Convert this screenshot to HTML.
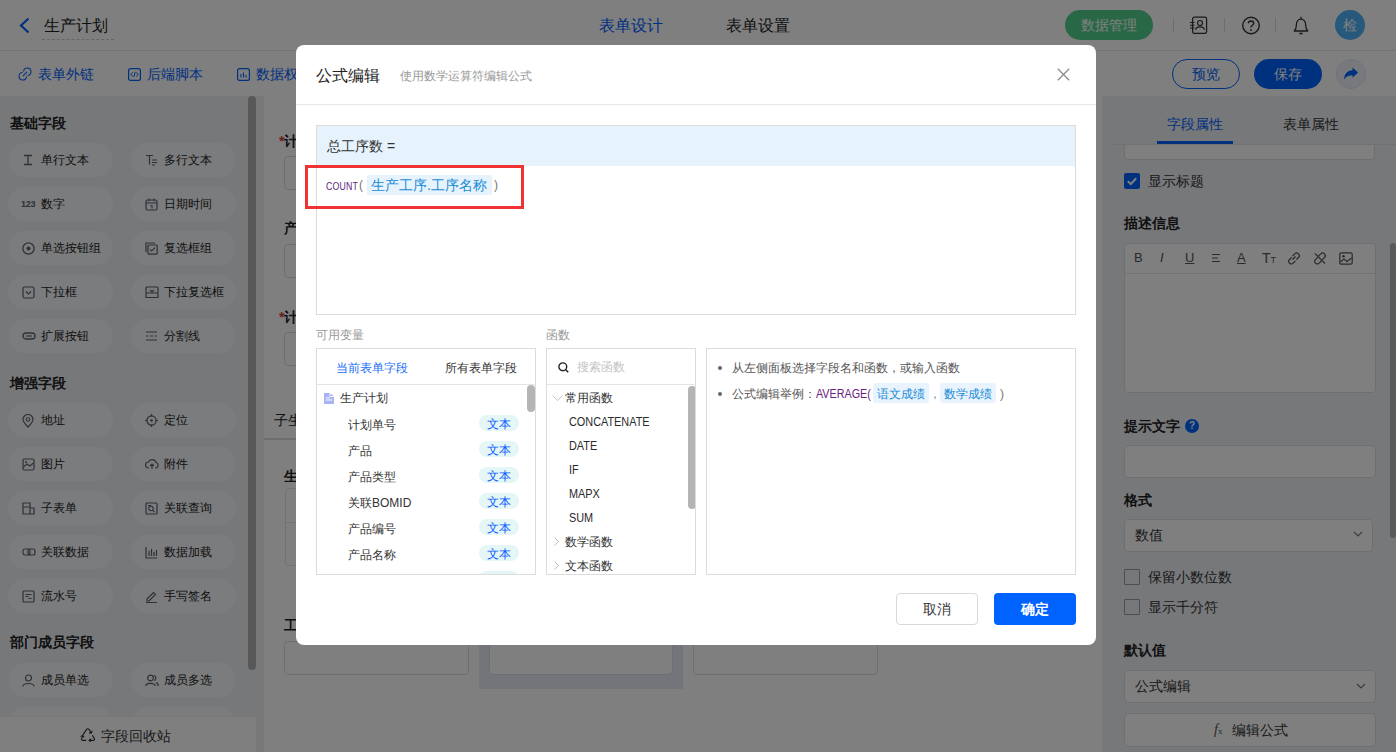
<!DOCTYPE html>
<html><head><meta charset="utf-8">
<style>
*{box-sizing:border-box;margin:0;padding:0}
html,body{width:1396px;height:752px;overflow:hidden;background:#fff;font-family:"Liberation Sans",sans-serif;color:#333}
.abs{position:absolute;white-space:nowrap}
#hdr{position:absolute;left:0;top:0;width:1396px;height:51px;background:#fff;border-bottom:1px solid #e8e8e8}
#tb{position:absolute;left:0;top:51px;width:1396px;height:45px;background:#fff}
#lp{position:absolute;left:0;top:96px;width:263px;height:656px;background:#eef0f4;overflow:hidden}
#cv{position:absolute;left:263px;top:96px;width:839px;height:656px;background:#fff;overflow:hidden}
#rp{position:absolute;left:1102px;top:96px;width:294px;height:656px;background:#eef0f4;overflow:hidden}
.pill{position:absolute;width:105px;height:34px;border-radius:17px;background:#f7f8fb;font-size:12px;color:#222;line-height:34px}
.pill .t{position:absolute;left:33px;top:0;white-space:nowrap}
.pill svg{position:absolute;left:14px;top:11px}
.sec{position:absolute;left:10px;font-size:14px;font-weight:bold;color:#222;line-height:20px;white-space:nowrap}
#ov{position:absolute;left:0;top:0;width:1396px;height:752px;background:rgba(0,0,0,.5)}
#md{position:absolute;left:296px;top:45px;width:800px;height:600px;background:#fff;border-radius:8px}
.row{position:absolute;left:0;width:210px;height:18px}
.row span{position:absolute;left:31px;top:1px;font-size:12px;color:#333;line-height:16px;white-space:nowrap}
.row::after{content:"文本";position:absolute;left:162px;top:-1px;width:40px;height:16px;border-radius:8px;background:#e5f6f6;color:#0a5cff;font-size:12px;line-height:18px;text-align:center}
.fn{position:absolute;left:22px;font-size:12px;color:#333;line-height:16px;white-space:nowrap;font-size:12.5px;transform:scaleX(0.87);transform-origin:0 0;color:#2a2a2a}
</style></head><body>
<div id="hdr">
  <svg class="abs" style="left:18px;top:17px" width="13" height="17" viewBox="0 0 13 17"><path d="M10.5 1.5 L3 8.5 L10.5 15.5" fill="none" stroke="#0062ff" stroke-width="2.2"/></svg>
  <div class="abs" style="left:44px;top:15px;font-size:16px;color:#222;line-height:22px">生产计划</div>
  <div class="abs" style="left:42px;top:39px;width:72px;border-top:1px dashed #ccc"></div>
  <div class="abs" style="left:599px;top:15px;font-size:16px;color:#0062ff;line-height:22px">表单设计</div>
  <div class="abs" style="left:726px;top:15px;font-size:16px;color:#222;line-height:22px">表单设置</div>
  <div class="abs" style="left:1065px;top:10px;width:88px;height:30px;border-radius:15px;background:#50d08c;color:#fff;font-size:14px;line-height:30px;text-align:center">数据管理</div>
  <div class="abs" style="left:1173px;top:18px;width:1px;height:14px;background:#ddd"></div>
  <div class="abs" style="left:1224px;top:18px;width:1px;height:14px;background:#ddd"></div>
  <div class="abs" style="left:1275px;top:18px;width:1px;height:14px;background:#ddd"></div>
  <svg class="abs" style="left:1189px;top:16px" width="20" height="18" viewBox="0 0 20 18"><rect x="3.6" y="1.2" width="14" height="16.2" rx="1.8" fill="none" stroke="#333" stroke-width="1.25"/><circle cx="11" cy="7" r="2.5" fill="none" stroke="#333" stroke-width="1.2"/><path d="M6.6 13.8 C7.2 10 14.8 10 15.4 13.8" fill="none" stroke="#333" stroke-width="1.2"/><path d="M1 6.5h4.5M1 9.3h4.5M1 12h4.5" stroke="#333" stroke-width="1.1"/></svg>
  <svg class="abs" style="left:1241px;top:16px" width="20" height="20" viewBox="0 0 20 20"><circle cx="10" cy="9.5" r="8.3" fill="none" stroke="#333" stroke-width="1.4"/><path d="M7.3 7.3 C7.3 4.3 12.7 4.3 12.7 7.3 C12.7 9.3 10 9.3 10 11.5" fill="none" stroke="#333" stroke-width="1.4"/><circle cx="10" cy="14" r="0.9" fill="#333"/></svg>
  <svg class="abs" style="left:1292px;top:15px" width="18" height="20" viewBox="0 0 18 20"><path d="M2.3 16 H15.7 C14.2 14.5 13.6 13 13.6 9.5 C13.6 6.3 11.6 4.2 9 4.2 C6.4 4.2 4.4 6.3 4.4 9.5 C4.4 13 3.8 14.5 2.3 16 Z" fill="none" stroke="#333" stroke-width="1.3" stroke-linejoin="round"/><path d="M9 1.8v2.2M7.3 18.5h3.4" stroke="#333" stroke-width="1.3"/></svg>
  <div class="abs" style="left:1335px;top:10px;width:30px;height:30px;border-radius:50%;background:#4cb2f6;color:#fff;font-size:14px;line-height:30px;text-align:center">检</div>
</div>
<div id="tb">
  <svg class="abs" style="left:18px;top:16px" width="14" height="14" viewBox="0 0 14 14"><path d="M5.6 4.2 A3.7 3.7 0 1 1 9.8 8.4 M8.4 9.8 A3.7 3.7 0 1 1 4.2 5.6 M5.2 8.8 L8.8 5.2" fill="none" stroke="#0062ff" stroke-width="1.05" stroke-linecap="round"/></svg>
  <div class="abs" style="left:38px;top:13px;font-size:14px;color:#0062ff;line-height:20px">表单外链</div>
  <svg class="abs" style="left:128px;top:17px" width="13" height="13" viewBox="0 0 13 13"><rect x="0.6" y="0.6" width="11.8" height="11.8" rx="2" fill="none" stroke="#0062ff" stroke-width="1.2"/><path d="M4.5 4.5 L3 6.5 L4.5 8.5 M8.5 4.5 L10 6.5 L8.5 8.5 M7.2 3.8 L5.8 9.2" fill="none" stroke="#0062ff" stroke-width="1"/></svg>
  <div class="abs" style="left:147px;top:13px;font-size:14px;color:#0062ff;line-height:20px">后端脚本</div>
  <svg class="abs" style="left:237px;top:17px" width="13" height="13" viewBox="0 0 13 13"><rect x="0.6" y="0.6" width="11.8" height="11.8" rx="2" fill="none" stroke="#0062ff" stroke-width="1.2"/><path d="M4 6v3.5M6.5 4.5v5M9 7v2.5" stroke="#0062ff" stroke-width="1.1"/></svg>
  <div class="abs" style="left:256px;top:13px;font-size:14px;color:#0062ff;line-height:20px">数据权限</div>
  <div class="abs" style="left:1172px;top:8px;width:68px;height:30px;border-radius:15px;border:1px solid #0062ff;color:#0062ff;font-size:14px;line-height:28px;text-align:center">预览</div>
  <div class="abs" style="left:1254px;top:8px;width:68px;height:30px;border-radius:15px;background:#0062ff;color:#fff;font-size:14px;line-height:30px;text-align:center">保存</div>
  <div class="abs" style="left:1336px;top:8px;width:30px;height:30px;border-radius:50%;border:1px solid #dfe6f5;background:#f0f3fa"></div>
  <svg class="abs" style="left:1343px;top:15px" width="16" height="16" viewBox="0 0 16 16"><path d="M15 6.5 L9.5 1.5 V4.2 C4.5 4.5 1.5 7.5 1 13.5 C3 10.5 5.5 9.2 9.5 9.2 V11.8 Z" fill="#0062ff"/></svg>
</div>
<div id="lp">
  <div class="sec" style="top:17px">基础字段</div>
  <div class="pill" style="left:8px;top:47px"><svg width="12" height="12" viewBox="0 0 12 12"><path d="M2 1.5h8M2 10.5h8M6 1.5v9" stroke="#5c6270" stroke-width="1.3" fill="none"/></svg><span class="t">单行文本</span></div>
  <div class="pill" style="left:131px;top:47px"><svg width="13" height="12" viewBox="0 0 13 12"><path d="M1 1.5h7M4.5 1.5v9M7 6h5M7 8.5h5M7 11h3" stroke="#5c6270" stroke-width="1.2" fill="none"/></svg><span class="t">多行文本</span></div>
  <div class="pill" style="left:8px;top:91px"><span class="abs" style="left:13px;top:0;font-size:9px;font-weight:bold;color:#5c6270;letter-spacing:-0.3px">123</span><span class="t">数字</span></div>
  <div class="pill" style="left:131px;top:91px"><svg width="13" height="13" viewBox="0 0 13 13"><rect x="1" y="2" width="11" height="10" rx="1.5" stroke="#5c6270" stroke-width="1.2" fill="none"/><path d="M1 5h11M4 0.5v3M9 0.5v3M5.5 7.5h1.5v3" stroke="#5c6270" stroke-width="1.1" fill="none"/></svg><span class="t">日期时间</span></div>
  <div class="pill" style="left:8px;top:135px"><svg width="13" height="13" viewBox="0 0 13 13"><circle cx="6.5" cy="6.5" r="5.6" stroke="#5c6270" stroke-width="1.3" fill="none"/><circle cx="6.5" cy="6.5" r="2" fill="#5c6270"/></svg><span class="t">单选按钮组</span></div>
  <div class="pill" style="left:131px;top:135px"><svg width="13" height="13" viewBox="0 0 13 13"><path d="M1 10V1h9" stroke="#5c6270" stroke-width="1.2" fill="none"/><rect x="3" y="3" width="9.2" height="9.2" rx="1" stroke="#5c6270" stroke-width="1.2" fill="none"/><path d="M5 7.3l1.7 1.7 3.3-3.3" stroke="#5c6270" stroke-width="1.2" fill="none"/></svg><span class="t">复选框组</span></div>
  <div class="pill" style="left:8px;top:179px"><svg width="13" height="13" viewBox="0 0 13 13"><rect x="1" y="1" width="11" height="11" rx="1.5" stroke="#5c6270" stroke-width="1.2" fill="none"/><path d="M4 5.5l2.5 2.5 2.5-2.5" stroke="#5c6270" stroke-width="1.2" fill="none"/></svg><span class="t">下拉框</span></div>
  <div class="pill" style="left:131px;top:179px"><svg width="14" height="13" viewBox="0 0 14 13"><rect x="1" y="1" width="12" height="6" rx="1" stroke="#5c6270" stroke-width="1.2" fill="none"/><path d="M1 7v4.5h12V7M5 4l2 2 2-2" stroke="#5c6270" stroke-width="1.2" fill="none"/></svg><span class="t">下拉复选框</span></div>
  <div class="pill" style="left:8px;top:223px"><svg width="14" height="12" viewBox="0 0 14 12"><rect x="1" y="3" width="12" height="6" rx="3" stroke="#5c6270" stroke-width="1.3" fill="none"/><path d="M4 6h6" stroke="#5c6270" stroke-width="1.2"/></svg><span class="t">扩展按钮</span></div>
  <div class="pill" style="left:131px;top:223px"><svg width="13" height="12" viewBox="0 0 13 12"><path d="M1 2h11M1 10h11M1 6h2.5M5 6h3M9.5 6h2.5" stroke="#5c6270" stroke-width="1.2" fill="none"/></svg><span class="t">分割线</span></div>

  <div class="sec" style="top:277px">增强字段</div>
  <div class="pill" style="left:8px;top:307px"><svg width="12" height="14" viewBox="0 0 12 14"><path d="M6 13 C2 9 1 7 1 5.5 a5 5 0 0 1 10 0 C11 7 10 9 6 13Z" stroke="#5c6270" stroke-width="1.2" fill="none"/><circle cx="6" cy="5.5" r="1.8" stroke="#5c6270" stroke-width="1.1" fill="none"/></svg><span class="t">地址</span></div>
  <div class="pill" style="left:131px;top:307px"><svg width="13" height="13" viewBox="0 0 13 13"><circle cx="6.5" cy="6.5" r="4.6" stroke="#5c6270" stroke-width="1.2" fill="none"/><circle cx="6.5" cy="6.5" r="1.3" fill="#5c6270"/><path d="M6.5 0v2.5M6.5 10.5V13M0 6.5h2.5M10.5 6.5H13" stroke="#5c6270" stroke-width="1.2"/></svg><span class="t">定位</span></div>
  <div class="pill" style="left:8px;top:351px"><svg width="13" height="13" viewBox="0 0 13 13"><rect x="1" y="1" width="11" height="11" rx="1.5" stroke="#5c6270" stroke-width="1.2" fill="none"/><path d="M1.5 9 L5 6 L8 8 L11.5 5" stroke="#5c6270" stroke-width="1.1" fill="none"/><circle cx="4" cy="4" r="1" fill="#5c6270"/></svg><span class="t">图片</span></div>
  <div class="pill" style="left:131px;top:351px"><svg width="14" height="12" viewBox="0 0 14 12"><path d="M4 10H3.5a3 3 0 0 1 0-6 a4 4 0 0 1 7.5 0.5 a2.8 2.8 0 0 1 -0.5 5.5H10M7 11V6M5 8l2-2 2 2" stroke="#5c6270" stroke-width="1.2" fill="none"/></svg><span class="t">附件</span></div>
  <div class="pill" style="left:8px;top:395px"><svg width="13" height="13" viewBox="0 0 13 13"><path d="M1 1h7v11H1ZM1 5h7M8 6h4v6H8" stroke="#5c6270" stroke-width="1.2" fill="none"/></svg><span class="t">子表单</span></div>
  <div class="pill" style="left:131px;top:395px"><svg width="13" height="13" viewBox="0 0 13 13"><rect x="1" y="1" width="11" height="11" rx="1" stroke="#5c6270" stroke-width="1.2" fill="none"/><circle cx="6" cy="6.5" r="2.2" stroke="#5c6270" stroke-width="1.1" fill="none"/><path d="M7.6 8.1l2 2M3 3.5h3" stroke="#5c6270" stroke-width="1.1"/></svg><span class="t">关联查询</span></div>
  <div class="pill" style="left:8px;top:439px"><svg width="14" height="12" viewBox="0 0 14 12"><rect x="1" y="3" width="7" height="6" rx="2" stroke="#5c6270" stroke-width="1.2" fill="none"/><rect x="6" y="3" width="7" height="6" rx="2" stroke="#5c6270" stroke-width="1.2" fill="none"/></svg><span class="t">关联数据</span></div>
  <div class="pill" style="left:131px;top:439px"><svg width="13" height="13" viewBox="0 0 13 13"><path d="M1 1v11h11M4 5v5M6.5 3v7M9 6v4M11.5 4v6" stroke="#5c6270" stroke-width="1.2" fill="none"/></svg><span class="t">数据加载</span></div>
  <div class="pill" style="left:8px;top:483px"><svg width="13" height="13" viewBox="0 0 13 13"><rect x="1" y="1" width="11" height="11" rx="1" stroke="#5c6270" stroke-width="1.2" fill="none"/><path d="M3.5 4.5h6M3.5 6.5h3M6.5 8.5h3" stroke="#5c6270" stroke-width="1.1"/></svg><span class="t">流水号</span></div>
  <div class="pill" style="left:131px;top:483px"><svg width="13" height="13" viewBox="0 0 13 13"><path d="M2 9 L8.5 2.5 L10.5 4.5 L4 11 H2Z M1 12.5h11" stroke="#5c6270" stroke-width="1.2" fill="none"/></svg><span class="t">手写签名</span></div>

  <div class="sec" style="top:536px">部门成员字段</div>
  <div class="pill" style="left:8px;top:567px"><svg width="13" height="13" viewBox="0 0 13 13"><circle cx="6.5" cy="4" r="3" stroke="#5c6270" stroke-width="1.2" fill="none"/><path d="M1 12.5 C1 8.5 12 8.5 12 12.5" stroke="#5c6270" stroke-width="1.2" fill="none"/></svg><span class="t">成员单选</span></div>
  <div class="pill" style="left:131px;top:567px"><svg width="14" height="13" viewBox="0 0 14 13"><circle cx="5.5" cy="4" r="2.8" stroke="#5c6270" stroke-width="1.2" fill="none"/><path d="M0.8 12 C0.8 8.5 10.2 8.5 10.2 12M9 1.5a2.6 2.6 0 0 1 0 5M11 8.5 C12.5 9 13.2 10.5 13.2 12" stroke="#5c6270" stroke-width="1.2" fill="none"/></svg><span class="t">成员多选</span></div>
  <div class="pill" style="left:8px;top:611px"></div>
  <div class="pill" style="left:131px;top:611px"></div>
  <div class="abs" style="left:248px;top:0;width:8px;height:574px;border-radius:4px;background:#b0b0b0"></div>
  <div class="abs" style="left:0;top:620px;width:256px;height:36px;background:#fff;border-top:1px solid #eee"></div>
  <svg class="abs" style="left:80px;top:632px" width="16" height="14" viewBox="0 0 16 14"><path d="M2.6 7.4 L6.6 1.4 Q7.8 0 9 1.4 L11.2 4.8 M9.4 4.9 L11.4 5.1 L12 3.1 M12.6 7.6 L14.4 10.6 Q15 12.4 13 12.4 H9.2 M10.6 11 L9 12.4 L10.6 13.8 M5.8 12.4 H3 Q1 12.4 1.6 10.6 L2.6 8.8 M1 8.4 L2.7 7.4 L3.8 9" fill="none" stroke="#333" stroke-width="1.1" stroke-linejoin="round" stroke-linecap="round"/></svg>
  <div class="abs" style="left:101px;top:630px;font-size:14px;color:#333;line-height:20px">字段回收站</div>
</div>
<div id="cv">
  <div class="abs" style="left:16px;top:37px;font-size:14px;font-weight:bold;color:#222;line-height:16px"><span style="color:#e4393c">*</span>计划单号</div>
  <div class="abs" style="left:21px;top:60px;width:300px;height:34px;border:1px solid #dcdfe6;border-radius:4px"></div>
  <div class="abs" style="left:21px;top:124px;font-size:14px;font-weight:bold;color:#222;line-height:16px">产品</div>
  <div class="abs" style="left:21px;top:148px;width:300px;height:34px;border:1px solid #dcdfe6;border-radius:4px"></div>
  <div class="abs" style="left:16px;top:213px;font-size:14px;font-weight:bold;color:#222;line-height:16px"><span style="color:#e4393c">*</span>计划日期</div>
  <div class="abs" style="left:21px;top:236px;width:300px;height:34px;border:1px solid #dcdfe6;border-radius:4px"></div>
  <div class="abs" style="left:11px;top:316px;font-size:14px;color:#222;line-height:16px">子生产工序</div>
  <div class="abs" style="left:1px;top:342px;width:800px;height:1.5px;background:#dcdcdc"></div>
  <div class="abs" style="left:21px;top:372px;font-size:14px;font-weight:bold;color:#222;line-height:16px">生产工序</div>
  <div class="abs" style="left:22px;top:392px;width:700px;height:78px;border:1px solid #e4e4e4;border-radius:4px"></div>
  <div class="abs" style="left:22px;top:426px;width:700px;height:1px;background:#e4e4e4"></div>
  <div class="abs" style="left:21px;top:521px;font-size:14px;font-weight:bold;color:#222;line-height:16px">工序</div>
  <div class="abs" style="left:216px;top:520px;width:204px;height:73px;background:#e6ebf5"></div>
  <div class="abs" style="left:21px;top:545px;width:185px;height:34px;border:1px solid #dcdfe6;border-radius:4px"></div>
  <div class="abs" style="left:226px;top:545px;width:184px;height:34px;border:1px solid #dcdfe6;border-radius:4px;background:#fff"></div>
  <div class="abs" style="left:430px;top:545px;width:185px;height:34px;border:1px solid #dcdfe6;border-radius:4px"></div>
  <div class="abs" style="left:0;top:0;width:1px;height:656px;background:#ececec"></div>
</div>
<div id="rp">
  <div class="abs" style="left:22px;top:30px;width:251px;height:34px;border:1px solid #dcdfe6;border-radius:4px;background:#fff"></div>
  <div class="abs" style="left:0;top:0;width:294px;height:48px;background:#eef0f4"></div>
  <div class="abs" style="left:65px;top:18px;font-size:14px;color:#0062ff;line-height:20px">字段属性</div>
  <div class="abs" style="left:181px;top:18px;font-size:14px;color:#333;line-height:20px">表单属性</div>
  <div class="abs" style="left:55px;top:45px;width:76px;height:3px;background:#0062ff"></div>
  <div class="abs" style="left:8px;top:48px;width:286px;height:1px;background:#e2e2e2"></div>
  <div class="abs" style="left:22px;top:77px;width:16px;height:16px;border-radius:2px;background:#0062ff"></div>
  <svg class="abs" style="left:22px;top:77px" width="16" height="16" viewBox="0 0 16 16"><path d="M3.8 8.2 L6.8 11 L12.2 5.2" stroke="#fff" stroke-width="2" fill="none"/></svg>
  <div class="abs" style="left:46px;top:75px;font-size:14px;color:#333;line-height:20px">显示标题</div>
  <div class="abs rb" style="left:22px;top:117px;font-size:14px;font-weight:bold;color:#222;line-height:20px">描述信息</div>
  <div class="abs" style="left:22px;top:147px;width:252px;height:150px;border:1px solid #dcdfe6;border-radius:4px;background:#fff"></div>
  <div class="abs" style="left:23px;top:177px;width:250px;height:1px;background:#e4e4e4"></div>
  <div class="abs" style="left:32px;top:152px;font-size:13px;color:#555;line-height:20px">B</div>
  <div class="abs" style="left:58px;top:152px;font-size:13px;color:#555;line-height:20px;font-style:italic">I</div>
  <div class="abs" style="left:83px;top:152px;font-size:13px;color:#555;line-height:20px;text-decoration:underline">U</div>
  <svg class="abs" style="left:109px;top:157px" width="10" height="10" viewBox="0 0 10 10"><path d="M1 1.5h8M1 5h6M1 8.5h8" stroke="#555" stroke-width="1"/></svg>
  <div class="abs" style="left:135px;top:152px;font-size:13px;color:#555;line-height:20px;text-decoration:underline">A</div>
  <div class="abs" style="left:160px;top:152px;font-size:14px;color:#555;line-height:20px">T<span style="font-size:9px">T</span></div>
  <svg class="abs" style="left:185px;top:156px" width="14" height="13" viewBox="0 0 14 13"><path d="M5.5 7.5 L8.5 4.5 M4.7 5.3 L2.5 7.5 a2.6 2.6 0 0 0 3.7 3.7 L8.4 9 M5.6 4 L7.8 1.8 a2.6 2.6 0 0 1 3.7 3.7 L9.3 7.7" fill="none" stroke="#555" stroke-width="1.2"/></svg>
  <svg class="abs" style="left:211px;top:156px" width="14" height="13" viewBox="0 0 14 13"><path d="M4.7 5.3 L2.5 7.5 a2.6 2.6 0 0 0 3.7 3.7 L8.4 9 M5.6 4 L7.8 1.8 a2.6 2.6 0 0 1 3.7 3.7 L9.3 7.7 M2 1.5 L12 11.5" fill="none" stroke="#555" stroke-width="1.2"/></svg>
  <svg class="abs" style="left:237px;top:156px" width="14" height="13" viewBox="0 0 14 13"><rect x="0.8" y="0.8" width="12.4" height="11.4" rx="1.5" stroke="#555" stroke-width="1.2" fill="none"/><path d="M1.5 10 L5 7 L8 9.5 L12.5 6" stroke="#555" stroke-width="1.1" fill="none"/><circle cx="4.5" cy="4.3" r="1.2" fill="#555"/></svg>
  <div class="abs" style="left:22px;top:320px;font-size:14px;font-weight:bold;color:#222;line-height:20px">提示文字</div>
  <div class="abs" style="left:83px;top:323px;width:14px;height:14px;border-radius:50%;background:#0062ff;color:#fff;font-size:10px;font-weight:bold;line-height:14px;text-align:center">?</div>
  <div class="abs" style="left:22px;top:349px;width:252px;height:33px;border:1px solid #dcdfe6;border-radius:4px;background:#fff"></div>
  <div class="abs" style="left:22px;top:394px;font-size:14px;font-weight:bold;color:#222;line-height:20px">格式</div>
  <div class="abs" style="left:22px;top:423px;width:249px;height:33px;border:1px solid #dcdfe6;border-radius:4px;background:#fff"></div>
  <div class="abs" style="left:33px;top:429px;font-size:14px;color:#333;line-height:20px">数值</div>
  <svg class="abs" style="left:251px;top:435px" width="10" height="6" viewBox="0 0 10 6"><path d="M1 1 L5 5 L9 1" stroke="#777" stroke-width="1.2" fill="none"/></svg>
  <div class="abs" style="left:22px;top:473px;width:16px;height:16px;border:1px solid #9a9ca6;border-radius:1px;background:transparent"></div>
  <div class="abs" style="left:46px;top:471px;font-size:14px;color:#333;line-height:20px">保留小数位数</div>
  <div class="abs" style="left:22px;top:503px;width:16px;height:16px;border:1px solid #9a9ca6;border-radius:1px;background:transparent"></div>
  <div class="abs" style="left:46px;top:501px;font-size:14px;color:#333;line-height:20px">显示千分符</div>
  <div class="abs" style="left:22px;top:544px;font-size:14px;font-weight:bold;color:#222;line-height:20px">默认值</div>
  <div class="abs" style="left:22px;top:574px;width:252px;height:33px;border:1px solid #dcdfe6;border-radius:4px;background:#fff"></div>
  <div class="abs" style="left:33px;top:580px;font-size:14px;color:#333;line-height:20px">公式编辑</div>
  <svg class="abs" style="left:254px;top:587px" width="10" height="6" viewBox="0 0 10 6"><path d="M1 1 L5 5 L9 1" stroke="#777" stroke-width="1.2" fill="none"/></svg>
  <div class="abs" style="left:22px;top:617px;width:252px;height:34px;border:1px solid #dcdfe6;border-radius:4px;background:#fff"></div>
  <div class="abs" style="left:112px;top:624px;font-size:14px;color:#555;line-height:20px;font-family:'Liberation Serif',serif;font-style:italic">f<span style="font-size:9px;font-style:normal">x</span></div>
  <div class="abs" style="left:130px;top:624px;font-size:14px;color:#333;line-height:20px">编辑公式</div>
  <div class="abs" style="left:288px;top:147px;width:6px;height:295px;border-radius:3px;background:#b4b4b4"></div>
</div>
<div id="ov"></div>
<div id="md">
  <div class="abs" style="left:20px;top:20px;font-size:16px;color:#222;line-height:22px">公式编辑</div>
  <div class="abs" style="left:104px;top:23px;font-size:12px;color:#999;line-height:16px">使用数学运算符编辑公式</div>
  <svg class="abs" style="left:761px;top:23px" width="13" height="13" viewBox="0 0 13 13"><path d="M0.8 0.8 L12.2 12.2 M12.2 0.8 L0.8 12.2" stroke="#8a8a8a" stroke-width="1.3"/></svg>
  <div class="abs" style="left:0;top:59px;width:800px;height:1px;background:#e8e8e8"></div>
  <!-- formula box -->
  <div class="abs" style="left:20px;top:80px;width:760px;height:190px;border:1px solid #dcdcdc"></div>
  <div class="abs" style="left:21px;top:81px;width:758px;height:40px;background:#e6f3fd"></div>
  <div class="abs" style="left:31px;top:91px;font-size:14px;color:#333;line-height:20px">总工序数 =</div>
  <div class="abs" style="left:30px;top:134px;font-size:11px;color:#5e1f80;line-height:14px;transform:scaleX(0.8);transform-origin:0 0;letter-spacing:0.2px">COUNT</div>
  <div class="abs" style="left:63px;top:132px;font-size:12px;color:#777;line-height:16px">(</div>
  <div class="abs" style="left:71px;top:130px;width:125px;height:20px;background:#e6f3fd;border-radius:2px"></div>
  <div class="abs" style="left:75px;top:131px;font-size:14px;color:#1a8bd6;line-height:18px">生产工序.工序名称</div>
  <div class="abs" style="left:198px;top:132px;font-size:12px;color:#777;line-height:16px">)</div>
  <div class="abs" style="left:9px;top:120px;width:219px;height:44px;border:3px solid #f03232"></div>
  <!-- labels -->
  <div class="abs" style="left:20px;top:282px;font-size:12px;color:#999;line-height:16px">可用变量</div>
  <div class="abs" style="left:250px;top:282px;font-size:12px;color:#999;line-height:16px">函数</div>
  <!-- var panel -->
  <div class="abs" style="left:20px;top:303px;width:220px;height:227px;border:1px solid #dcdcdc;overflow:hidden">
    <div class="abs" style="left:19px;top:11px;font-size:12px;color:#1a6ef5;line-height:16px">当前表单字段</div>
    <div class="abs" style="left:128px;top:11px;font-size:12px;color:#333;line-height:16px">所有表单字段</div>
    <div class="abs" style="left:0;top:35px;width:220px;height:1px;background:#e4e4e4"></div>
    <svg class="abs" style="left:7px;top:44px" width="10" height="11" viewBox="0 0 10 11"><path d="M0 0h6L10 3.5V11H0Z" fill="#a9b3f8"/><path d="M6 0V3.5H10" fill="none" stroke="#fff" stroke-width="0.8"/><path d="M1.8 4.8h4M1.8 7h6.4" stroke="#fff" stroke-width="1"/></svg>
    <div class="abs" style="left:23px;top:41px;font-size:12px;color:#333;line-height:16px">生产计划</div>
    <div class="row" style="top:67px"><span>计划单号</span></div>
    <div class="row" style="top:93px"><span>产品</span></div>
    <div class="row" style="top:119px"><span>产品类型</span></div>
    <div class="row" style="top:145px"><span>关联BOMID</span></div>
    <div class="row" style="top:171px"><span>产品编号</span></div>
    <div class="row" style="top:197px"><span>产品名称</span></div>
    <div class="row" style="top:223px"><span></span></div>
    <div class="abs" style="left:210px;top:36px;width:8px;height:27px;border-radius:4px;background:#b5b5b5"></div>
  </div>
  <!-- func panel -->
  <div class="abs" style="left:250px;top:303px;width:150px;height:227px;border:1px solid #dcdcdc;overflow:hidden">
    <svg class="abs" style="left:11px;top:13px" width="11" height="11" viewBox="0 0 11 11"><circle cx="4.8" cy="4.8" r="3.9" stroke="#222" stroke-width="1.4" fill="none"/><path d="M7.7 7.7 L10.2 10.2" stroke="#222" stroke-width="1.5"/></svg>
    <div class="abs" style="left:30px;top:10px;font-size:12px;color:#c4c4c4;line-height:16px">搜索函数</div>
    <div class="abs" style="left:0;top:35px;width:150px;height:1px;background:#e4e4e4"></div>
    <svg class="abs" style="left:5px;top:46px" width="11" height="7" viewBox="0 0 11 7"><path d="M0.5 0.5 L5.5 5.5 L10.5 0.5" stroke="#c4c4c4" stroke-width="1" fill="none"/></svg>
    <div class="abs" style="left:18px;top:41px;font-size:12px;color:#333;line-height:16px">常用函数</div>
    <div class="fn" style="top:65px">CONCATENATE</div>
    <div class="fn" style="top:89px">DATE</div>
    <div class="fn" style="top:113px">IF</div>
    <div class="fn" style="top:137px">MAPX</div>
    <div class="fn" style="top:161px">SUM</div>
    <svg class="abs" style="left:7px;top:188px" width="5" height="9" viewBox="0 0 5 9"><path d="M0.5 0.5 L4.5 4.5 L0.5 8.5" stroke="#bbb" stroke-width="1" fill="none"/></svg>
    <div class="abs" style="left:18px;top:185px;font-size:12px;color:#333;line-height:16px">数学函数</div>
    <svg class="abs" style="left:7px;top:212px" width="5" height="9" viewBox="0 0 5 9"><path d="M0.5 0.5 L4.5 4.5 L0.5 8.5" stroke="#bbb" stroke-width="1" fill="none"/></svg>
    <div class="abs" style="left:18px;top:209px;font-size:12px;color:#333;line-height:16px">文本函数</div>
    <div class="abs" style="left:141px;top:37px;width:8px;height:123px;border-radius:4px;background:#b5b5b5"></div>
  </div>
  <!-- help panel -->
  <div class="abs" style="left:410px;top:303px;width:370px;height:227px;border:1px solid #dcdcdc">
    <div class="abs" style="left:11px;top:17px;width:4px;height:4px;border-radius:50%;background:#666"></div>
    <div class="abs" style="left:25px;top:11px;font-size:12px;color:#555;line-height:16px">从左侧面板选择字段名和函数，或输入函数</div>
    <div class="abs" style="left:11px;top:43px;width:4px;height:4px;border-radius:50%;background:#666"></div>
    <div class="abs" style="left:25px;top:37px;font-size:12px;color:#555;line-height:16px">公式编辑举例：</div>
    <div class="abs" style="left:109px;top:37px;font-size:12px;color:#6a2080;line-height:16px;font-size:12.5px;transform:scaleX(0.86);transform-origin:0 0">AVERAGE(</div>
    <div class="abs" style="left:166px;top:34px;width:56px;height:20px;background:#e8f3fd;border-radius:3px"></div>
    <div class="abs" style="left:170px;top:37px;font-size:12px;color:#1a8bd6;line-height:16px">语文成绩</div>
    <div class="abs" style="left:222px;top:37px;font-size:12px;color:#888;line-height:16px">，</div>
    <div class="abs" style="left:233px;top:34px;width:56px;height:20px;background:#e8f3fd;border-radius:3px"></div>
    <div class="abs" style="left:237px;top:37px;font-size:12px;color:#1a8bd6;line-height:16px">数学成绩</div>
    <div class="abs" style="left:293px;top:37px;font-size:12px;color:#777;line-height:16px">)</div>
  </div>
  <!-- buttons -->
  <div class="abs" style="left:600px;top:548px;width:82px;height:32px;border:1px solid #d9d9d9;border-radius:4px;font-size:14px;color:#333;line-height:30px;text-align:center">取消</div>
  <div class="abs" style="left:698px;top:548px;width:82px;height:32px;border-radius:4px;background:#0062ff;font-size:14px;color:#fff;line-height:32px;text-align:center;font-weight:bold">确定</div>
</div>
</body></html>
